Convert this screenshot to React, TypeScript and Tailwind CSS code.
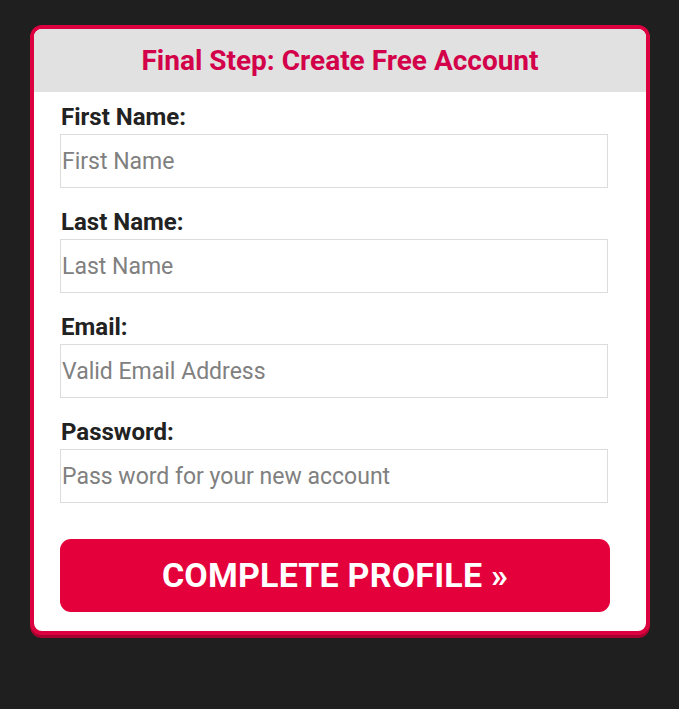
import React from 'react';

const fields = [
  { label: 'First Name:', placeholder: 'First Name' },
  { label: 'Last Name:', placeholder: 'Last Name' },
  { label: 'Email:', placeholder: 'Valid Email Address' },
  { label: 'Password:', placeholder: 'Pass word for your new account' },
];

export default function App() {
  return (
    <div className="min-h-[709px] w-full bg-[#1f1f1f] pt-[25px] pl-[30px] font-['Roboto',sans-serif]">
      <div className="w-[620px] rounded-[12px] border-[4px] border-[#dc0040] bg-white overflow-hidden shadow-[0_3px_0_#a8002f]">
        <div className="h-[63px] bg-[#e1e1e1] flex items-center justify-center">
          <h1 className="text-[28px] font-bold text-[#d3004a]">Final Step: Create Free Account</h1>
        </div>
        <form className="pl-[26px] pt-[12px] pb-[19px]">
          {fields.map((f) => (
            <div key={f.label} className="mb-[21px] w-[548px]">
              <label className="block text-[24px] font-bold text-[#222] leading-[26px] pl-[1px] mb-[4px]">{f.label}</label>
              <input
                type="text"
                placeholder={f.placeholder}
                className="block w-full h-[54px] border border-[#dcdcdc] px-[1px] text-[23px] text-[#333] placeholder:text-[#808080] outline-none"
              />
            </div>
          ))}
          <button
            type="button"
            className="mt-[15px] w-[550px] h-[73px] rounded-[11px] bg-[#e4003a] text-white text-[34px] font-bold tracking-[0.2px]"
          >
            COMPLETE PROFILE »
          </button>
        </form>
      </div>
    </div>
  );
}
